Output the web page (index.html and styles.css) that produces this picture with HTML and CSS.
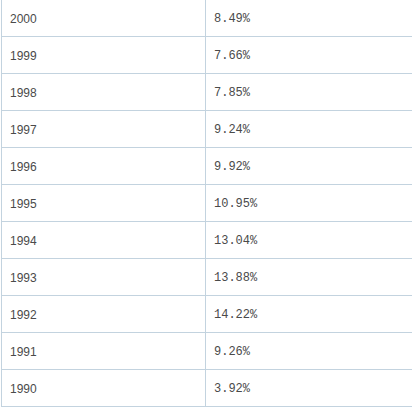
FILE: index.html
```html
<!DOCTYPE html>
<html>
<head>
<meta charset="utf-8">
<link rel="stylesheet" href="styles.css">
</head>
<body>
<div class="table">
  <div class="row"><div class="year">2000</div><div class="rate">8.49%</div></div>
  <div class="row"><div class="year">1999</div><div class="rate">7.66%</div></div>
  <div class="row"><div class="year">1998</div><div class="rate">7.85%</div></div>
  <div class="row"><div class="year">1997</div><div class="rate">9.24%</div></div>
  <div class="row"><div class="year">1996</div><div class="rate">9.92%</div></div>
  <div class="row"><div class="year">1995</div><div class="rate">10.95%</div></div>
  <div class="row"><div class="year">1994</div><div class="rate">13.04%</div></div>
  <div class="row"><div class="year">1993</div><div class="rate">13.88%</div></div>
  <div class="row"><div class="year">1992</div><div class="rate">14.22%</div></div>
  <div class="row"><div class="year">1991</div><div class="rate">9.26%</div></div>
  <div class="row"><div class="year">1990</div><div class="rate">3.92%</div></div>
</div>
</body>
</html>
```
FILE: styles.css
```css
html, body {
  margin: 0;
  padding: 0;
  background: #ffffff;
  overflow: hidden;
}
.table {
  margin-left: 1px;
  width: 420px;
  border-left: 1px solid #c3d3df;
  display: flex;
  flex-direction: column;
  color: #4a4a4a;
  font-size: 12px;
}
.row {
  display: grid;
  grid-template-columns: 204px 1fr;
  height: 36px;
  border-bottom: 1px solid #c3d3df;
}
.year, .rate {
  display: flex;
  align-items: center;
  padding-left: 8px;
  padding-top: 1px;
}
.year {
  font-family: "Liberation Sans", sans-serif;
  border-right: 1px solid #c3d3df;
}
.rate {
  font-family: "Liberation Mono", monospace;
}
```
